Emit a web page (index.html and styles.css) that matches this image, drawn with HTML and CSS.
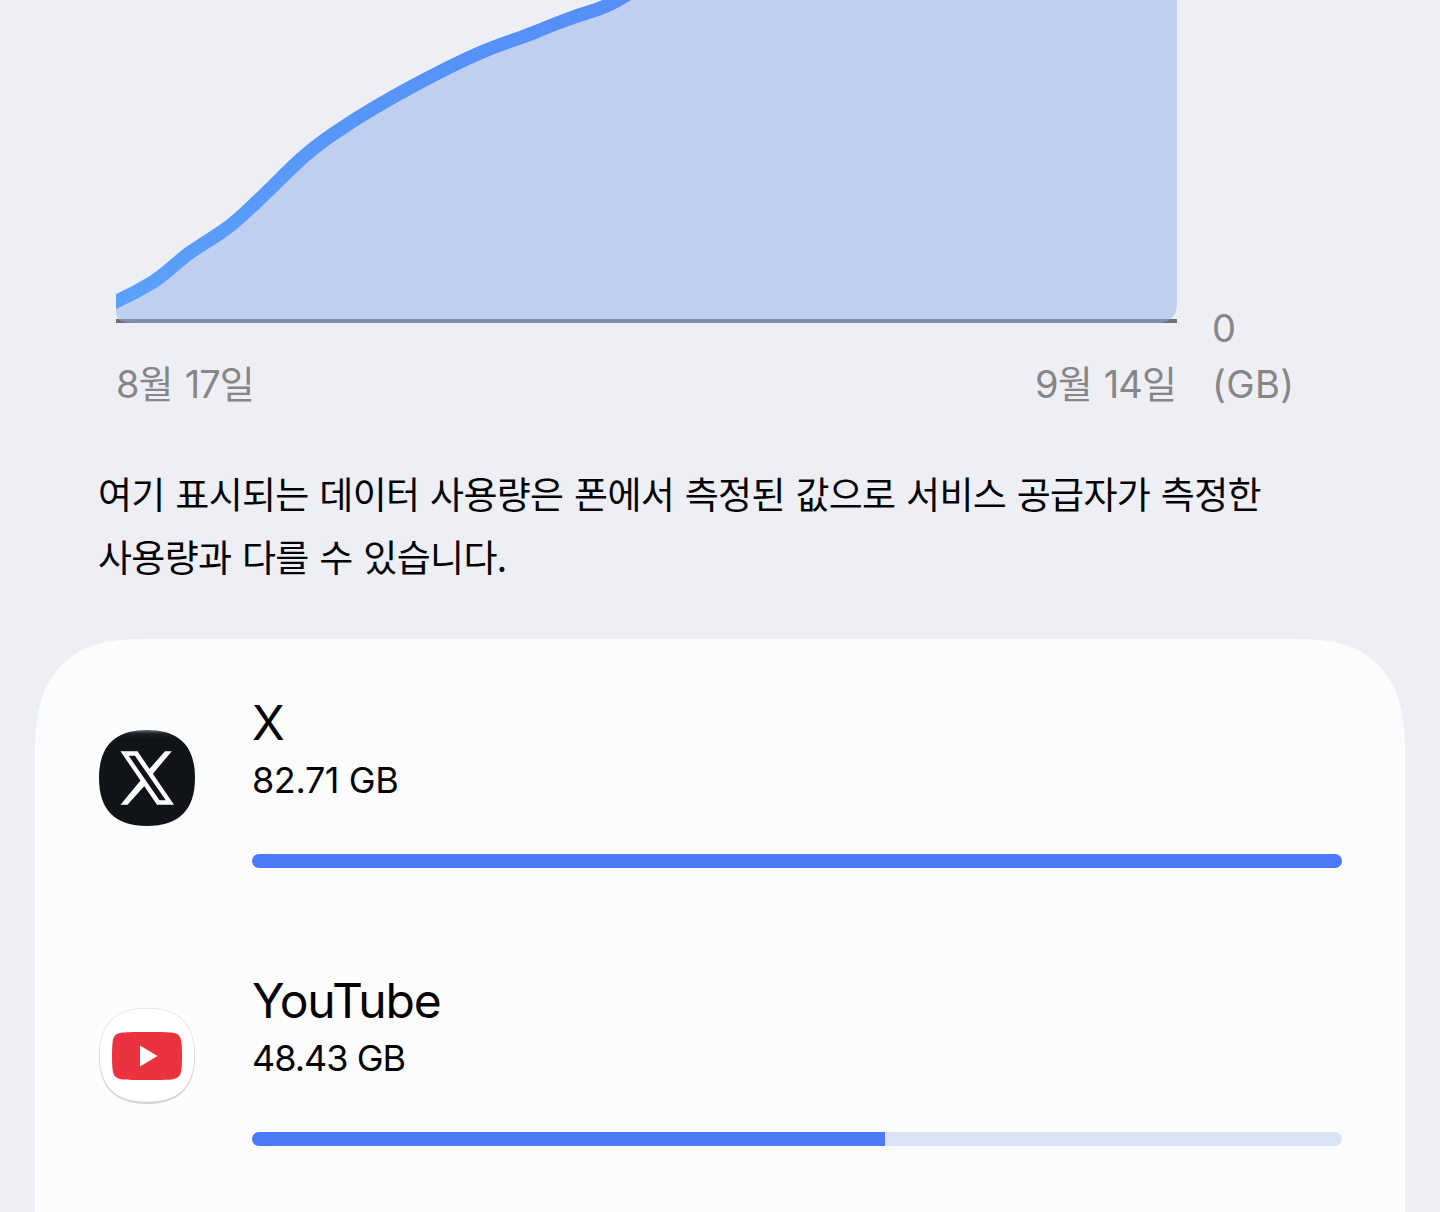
FILE: index.html
```html
<!DOCTYPE html>
<html lang="ko">
<head>
<meta charset="utf-8">
<title>데이터 사용량</title>
<link rel="stylesheet" href="styles.css">
</head>
<body>
<main class="screen">
  <section class="usage">
    <div class="plot">
      <svg class="chart" width="1061" height="324" viewBox="116 0 1061 324">
        <defs>
          <linearGradient id="line" gradientUnits="userSpaceOnUse" x1="0" y1="0" x2="0" y2="310">
            <stop offset="0" stop-color="#548ff8"/><stop offset="1" stop-color="#5ba1fa"/>
          </linearGradient>
        </defs>
        <path d="M116 321H1177" stroke="#707072" stroke-width="4"/>
        <path d="M116 301.500Q135 293 153 282C166 274 177 262 190 252.500C202 244 215 237 227 228C238 220 248 210 257 201.500C274 186 288 170 305 155.500C317 145 330 136 343 127.500C366 112 389 99 413 86C439 72 466 58 493 47.500C506 42.500 520 38 533 33C545 28 556 23.500 567 19.500C580 14.500 594 11 607 5.500L625-5H1177V303Q1177 323 1157 323H132Q116 323 116 312Z" fill="#92adea" fill-opacity=".5"/>
        <path d="M106 306L116 301.500Q135 293 153 282C166 274 177 262 190 252.500C202 244 215 237 227 228C238 220 248 210 257 201.500C274 186 288 170 305 155.500C317 145 330 136 343 127.500C366 112 389 99 413 86C439 72 466 58 493 47.500C506 42.500 520 38 533 33C545 28 556 23.500 567 19.500C580 14.500 594 11 607 5.500C614 2.500 620-1 628-6" fill="none" stroke="url(#line)" stroke-width="13.500"/>
      </svg>
      <div class="dates"><span>8월 17일</span><span>9월 14일</span></div>
    </div>
    <div class="scale"><span class="zero">0</span><span class="unit">(GB)</span></div>
  </section>
  <p class="note">여기 표시되는 데이터 사용량은 폰에서 측정된 값으로 서비스 공급자가 측정한<br>사용량과 다를 수 있습니다.</p>
  <section class="apps">
    <svg class="cap" width="1370" height="120" viewBox="0 0 1370 120"><path d="M0 120V106C1 65 10 42 29 24C47 7 67 0 112 0H1258C1303 0 1323 7 1341 24C1360 42 1369 65 1370 106V120Z" fill="#fcfcfd"/></svg>
    <ul class="list">
      <li class="app">
        <svg class="icon" width="98" height="98" viewBox="0 0 98 98">
          <defs><linearGradient id="rim" x1="0" y1="0" x2="0" y2="1"><stop offset="0" stop-color="#63666a"/><stop offset=".04" stop-color="#1b1f24"/><stop offset=".1" stop-color="#101419"/></linearGradient></defs>
          <path d="M49 1C81 1 97 17 97 49S81 97 49 97S1 81 1 49S17 1 49 1Z" fill="url(#rim)"/>
          <path d="M22.500 22.300H39.500L76 75.700H59Z M30.700 26.800L61.500 71.300H67.800L37 26.800Z" fill="#fff" fill-rule="evenodd"/>
          <path d="M67 22.300H73.800L54 45.700L50.500 41Z M43.800 50L47.700 55.500L29.500 75.700H22.500Z" fill="#fff"/>
        </svg>
        <div class="detail">
          <h2 class="name">X</h2>
          <p class="amount">82.71 GB</p>
          <div class="bar"><div class="value" style="width:100%"></div></div>
        </div>
      </li>
      <li class="app">
        <svg class="icon" width="98" height="98" viewBox="0 0 98 98">
          <path d="M49 1C81 1 97 17 97 49S81 97 49 97S1 81 1 49S17 1 49 1Z" fill="#d5d5d7"/>
          <path d="M49 1.500C80.500 1.500 96.300 17 96.300 48S81 94.800 49 94.800S1.700 79 1.700 48S17.500 1.500 49 1.500Z" fill="#fff"/>
          <path d="M49 25C65 25 71 25.200 75 25.800C80.500 26.800 82.600 29.500 83.300 34.500Q84 39 84 49T83.300 63.500C82.600 68.500 80.500 71.200 75 72.200C71 72.800 65 73 49 73S27 72.800 23 72.200C17.500 71.200 15.400 68.500 14.700 63.500Q14 59 14 49T14.700 34.500C15.400 29.500 17.500 26.800 23 25.800C27 25.200 33 25 49 25Z" fill="#eb3340"/>
          <path d="M42 38.500V59.500L59.500 49Z" fill="#fff"/>
        </svg>
        <div class="detail">
          <h2 class="name youtube">YouTube</h2>
          <p class="amount second">48.43 GB</p>
          <div class="bar"><div class="value" style="width:58.070%"></div></div>
        </div>
      </li>
    </ul>
  </section>
</main>
</body>
</html>
```
FILE: styles.css
```css
* { box-sizing: border-box; }
body {
  margin: 0;
  background: #eeeff4;
  color: #030303;
  font-family: Inter, "Noto Sans CJK KR", sans-serif;
}
.screen {
  width: 1440px;
  height: 1212px;
  overflow: hidden;
}
.usage {
  display: flex;
  gap: 35px;
  height: 462px;
  padding-left: 116px;
  color: #868688;
  font-size: 38px;
}
.plot { width: 1061px; }
.chart { display: block; }
.dates {
  display: flex;
  justify-content: space-between;
  padding: 30px 1px 0 0;
  line-height: 60px;
  letter-spacing: -0.9px;
  word-spacing: 2.2px;
}
.scale {
  display: flex;
  flex-direction: column;
  padding-top: 300px;
}
.zero { line-height: 56px; }
.unit { line-height: 56px; letter-spacing: 0.4px; }
.note {
  height: 177px;
  margin: 0;
  padding-left: 98px;
  font-family: "Noto Sans CJK KR", sans-serif;
  font-size: 37px;
  line-height: 63px;
  letter-spacing: -0.7px;
  word-spacing: 1px;
  white-space: nowrap;
}
.apps {
  display: grid;
  width: 1370px;
  height: 573px;
  margin: 0 35px;
  background: linear-gradient(#fcfcfd, #fcfcfd) 0 119px / 100% 100% no-repeat;
}
.cap, .list { grid-area: 1 / 1; }
.list {
  margin: 0;
  padding: 55px 63px 0;
  list-style: none;
}
.app {
  display: flex;
  gap: 56px;
  height: 278px;
}
.icon { flex: none; margin-top: 35px; }
.detail { width: 1090px; }
.name {
  margin: 0;
  font-size: 48px;
  font-weight: 400;
  line-height: 58px;
}
.youtube { letter-spacing: -1.2px; }
.amount {
  margin: 0;
  font-size: 36px;
  line-height: 57px;
  letter-spacing: -0.4px;
}
.second { letter-spacing: -1px; }
.bar {
  height: 14px;
  margin-top: 45px;
  overflow: hidden;
  border-radius: 7px;
  background: #dbe3f6;
}
.value { height: 100%; background: #4a7af8; }
```
